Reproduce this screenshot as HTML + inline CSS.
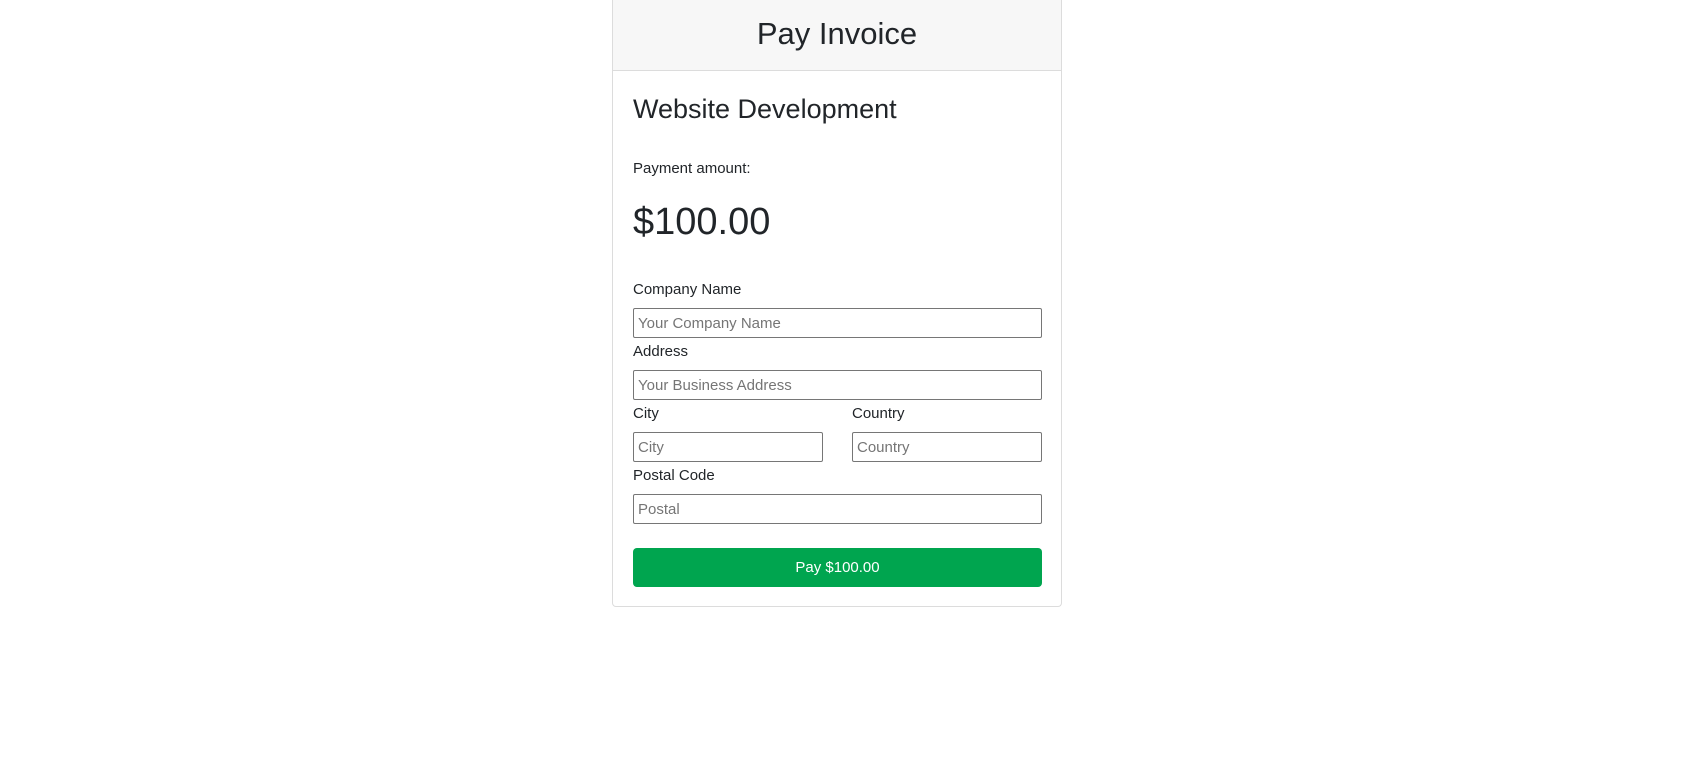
<!DOCTYPE html>
<html><head><meta charset="utf-8"><style>
*{box-sizing:border-box;margin:0;padding:0}
body{width:1683px;height:761px;background:#fff;font-family:"Liberation Sans",sans-serif;color:#212529;position:relative;overflow:hidden}
.card{position:absolute;left:612px;top:0;width:450px;height:607px;border:1px solid #dcdcdc;border-top:none;border-radius:0 0 4px 4px}
.hdr{position:absolute;left:0;top:0;width:448px;height:71px;background:#f7f7f7;border-bottom:1px solid #dcdcdc;text-align:center;font-size:31px;line-height:68px}
.t{position:absolute;left:633px;white-space:nowrap}
.in{position:absolute;left:633px;height:30px;border:1px solid #767676;border-radius:2px;font-size:15px;color:#757575;padding-left:4px;line-height:30px}
.btn{position:absolute;left:633px;top:548px;width:409px;height:39px;background:#00a54f;border-radius:4px;color:#fff;text-align:center;line-height:40px;font-size:15px}
</style></head><body>
<div class="card"><div class="hdr">Pay Invoice</div></div>
<div class="t" style="top:94px;font-size:27px">Website Development</div>
<div class="t" style="top:160px;font-size:15px">Payment amount:</div>
<div class="t" style="top:201px;font-size:38px">$100.00</div>
<div class="t" style="top:281px;font-size:15px">Company Name</div>
<div class="in" style="top:308px;width:409px">Your Company Name</div>
<div class="t" style="top:343px;font-size:15px">Address</div>
<div class="in" style="top:370px;width:409px">Your Business Address</div>
<div class="t" style="top:405px;font-size:15px">City</div>
<div class="t" style="top:405px;left:852px;font-size:15px">Country</div>
<div class="in" style="top:432px;width:190px">City</div>
<div class="in" style="top:432px;left:852px;width:190px">Country</div>
<div class="t" style="top:467px;font-size:15px">Postal Code</div>
<div class="in" style="top:494px;width:409px">Postal</div>
<div class="btn">Pay $100.00</div>
</body></html>
